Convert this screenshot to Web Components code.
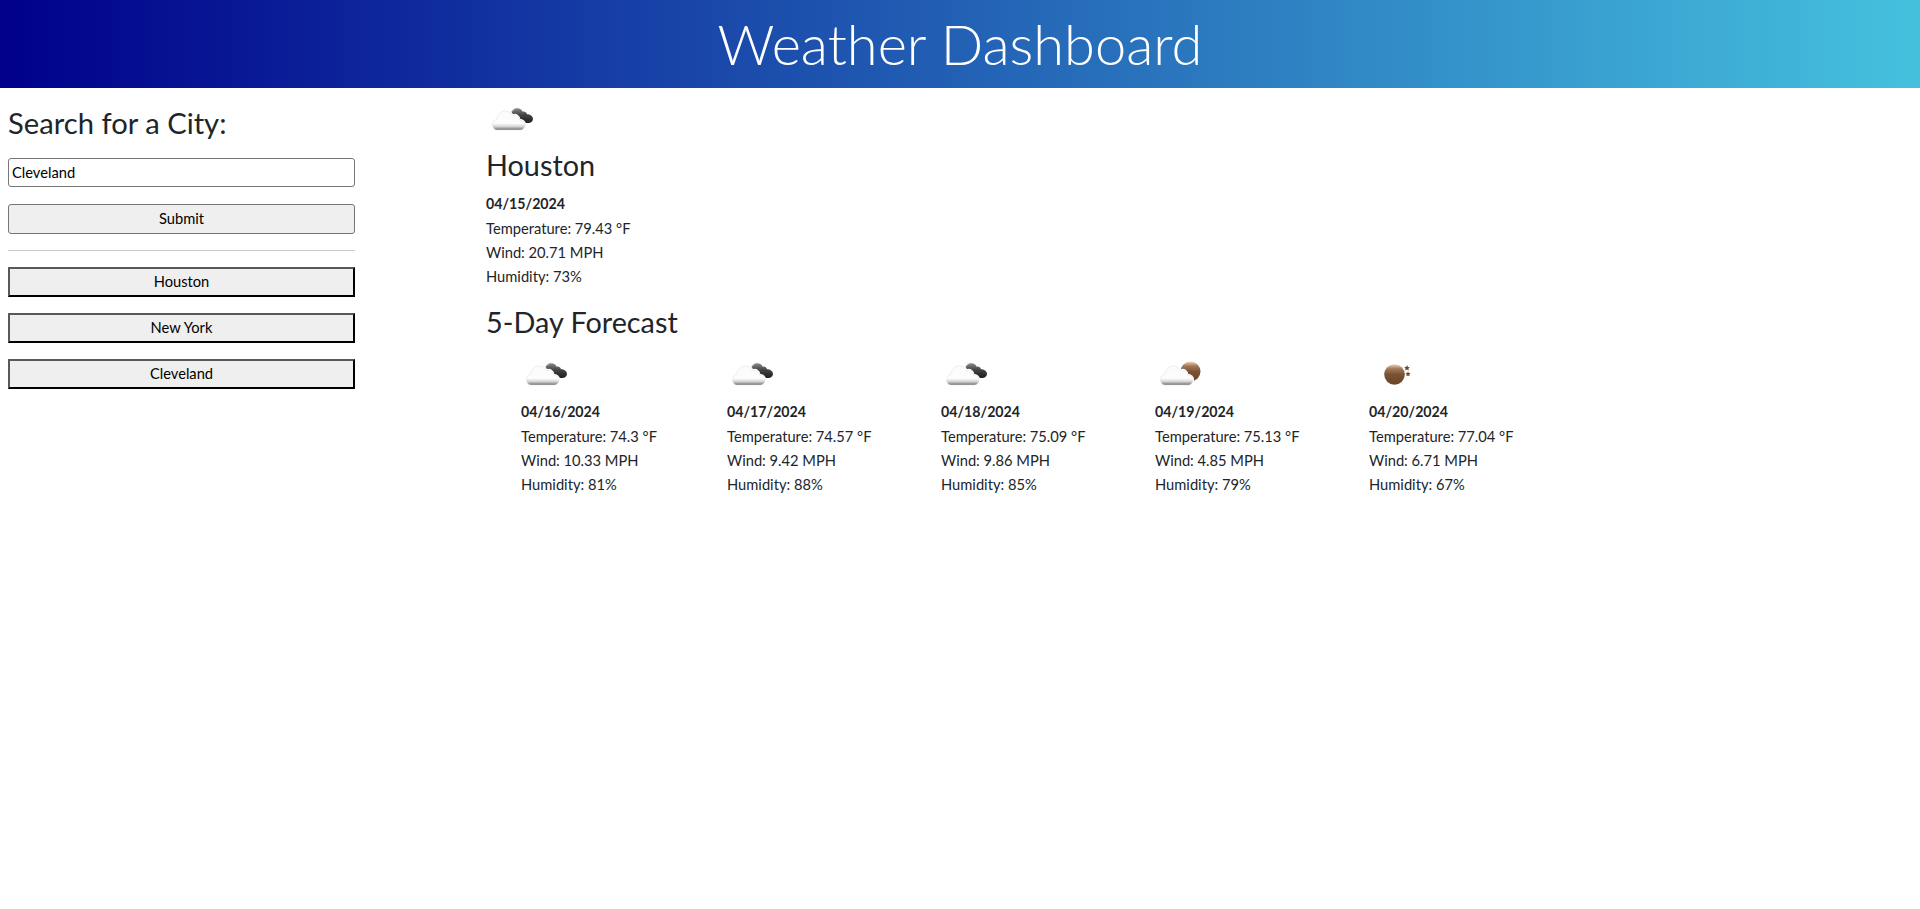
<!DOCTYPE html>
<html>
<head>
<meta charset="utf-8">
<title>Weather Dashboard</title>
<style>
  body { margin: 0; background: #fff; color: #212529; font-family: Lato, "Liberation Sans", sans-serif; font-size: 14.7px; }
</style>
</head>
<body>
<weather-app></weather-app>
<script>
// --- Icons, drawn in the 50x50 box of the original images ---
const defs = `
  <defs>
    <linearGradient id="white" x1="0" y1="0" x2="0" y2="1">
      <stop offset="0" stop-color="#fbfbfb"/><stop offset=".65" stop-color="#fdfdfd"/>
      <stop offset=".82" stop-color="#d4d4d4"/><stop offset="1" stop-color="#6f6f6f"/>
    </linearGradient>
    <linearGradient id="dark" x1="0" y1="0" x2="0" y2="1">
      <stop offset="0" stop-color="#8a8a8a"/><stop offset=".45" stop-color="#444"/><stop offset="1" stop-color="#1e1e1e"/>
    </linearGradient>
    <linearGradient id="brown" x1="0" y1="0" x2="0" y2="1">
      <stop offset="0" stop-color="#eed6c0"/><stop offset=".22" stop-color="#a47a58"/><stop offset=".5" stop-color="#7a5233"/><stop offset="1" stop-color="#6a4425"/>
    </linearGradient>
    <filter id="soft" x="-10%" y="-10%" width="120%" height="120%"><feGaussianBlur stdDeviation=".3"/></filter>
  </defs>`;
const cloudPath = "M9.500 34c-3 0-5-2.300-5-5.300 0-2.900 1.700-5 4.500-5.500 .3-4.700 3.800-8.200 8.200-8.200 3.400 0 6 1.700 7.300 4.700 1.500-.8 3.400-.8 4.800.2 1.400 1 2.100 2.500 2.100 4.100 3.200.1 5.600 2.200 5.600 5 0 2.900-2.200 5-5.200 5z";
const whiteCloud = `<path fill="#fff" stroke="#fff" stroke-width="2.400" d="${cloudPath}"/><path fill="url(#white)" stroke="#dcdcdc" stroke-width=".5" d="${cloudPath}"/>`;
const darkCloud = `<path fill="url(#dark)" d="M26 27c-2 0-3.500-2-3.500-6 0-5 3-8.800 6.800-8.800 2.600 0 4.500 1.300 5.400 3.500 1.800-.5 3.800.3 4.300 2.500 3 0 6 2 6 4.600 0 2.600-2 4.200-4.800 4.200z"/><path fill="none" stroke="#aaa" stroke-width=".9" d="M22.500 19c.6-3.600 3-6.300 6.800-6.800"/>`;
const brownSun = `<circle cx="34.500" cy="20.500" r="10" fill="url(#brown)"/>`;
const ICONS = {
  cloudy: `${darkCloud}${whiteCloud}`,
  partly: `${brownSun}${whiteCloud}`,
  clear: `<circle cx="24.500" cy="23.500" r="10.300" fill="url(#brown)"/><path fill="#6d4626" d="M37 14l.9 1.900 2 .3-1.500 1.400.4 2-1.800-1-1.800 1 .4-2-1.500-1.400 2-.3zM38 20.500l.8 1.500 1.700.3-1.200 1.200.3 1.700-1.600-.8-1.600.8.3-1.700-1.200-1.200 1.700-.3z"/>`
};

customElements.define("weather-icon", class extends HTMLElement {
  connectedCallback() {
    const shadow = this.attachShadow({ mode: "open" });
    shadow.innerHTML = `
      <style>
        :host { display: block; width: 50px; height: 50px; margin-left: 1px; }
        svg { display: block; }
      </style>
      <svg width="50" height="50" viewBox="0 0 50 50" aria-hidden="true">${defs}<g filter="url(#soft)">${ICONS[this.getAttribute("type")]}</g></svg>`;
  }
});

customElements.define("app-header", class extends HTMLElement {
  constructor() {
    super();
    this.attachShadow({ mode: "open" }).innerHTML = `
      <style>
        :host {
          display: flex; justify-content: center; align-items: center; height: 88px;
          background: linear-gradient(to right, #00008b, #45c1de); color: #fff;
        }
        h1 { margin: 0; font-size: 56px; font-weight: 300; line-height: 1; }
      </style>
      <h1><slot></slot></h1>`;
  }
});

customElements.define("city-button", class extends HTMLElement {
  constructor() {
    super();
    this.attachShadow({ mode: "open" }).innerHTML = `
      <style>
        :host { display: block; }
        button {
          display: block; width: 100%; height: 30px; padding: 0 0 2px; background: #efefef; color: #000;
          border: 2px solid #000; font: inherit; border-color: #595959 #000 #000 #595959;
        }
      </style>
      <button type="button"><slot></slot></button>`;
  }
});

customElements.define("search-panel", class extends HTMLElement {
  constructor() {
    super();
    this.attachShadow({ mode: "open" }).innerHTML = `
      <style>
        :host { display: flex; flex-direction: column; width: 347px; margin-left: 8px; padding-top: 18px; }
        h2 { margin: 0 0 18px; font-size: 29.200px; font-weight: 400; line-height: 34px; }
        input, .submit {
          box-sizing: border-box; width: 100%; font: inherit; color: #000;
          border: 1px solid #767676; border-radius: 3px;
        }
        input { display: block; height: 29px; padding: 0 3px 1px; background: #fff; }
        .submit { display: block; height: 30px; margin-top: 17px; padding: 0 0 2px; background: #efefef; }
        hr { width: 100%; box-sizing: border-box; margin: 16px 0; border: 0; border-top: 1px solid #ccc; }
        .cities { display: flex; flex-direction: column; gap: 16px; }
      </style>
      <h2>Search for a City:</h2>
      <input type="text" value="Cleveland">
      <button class="submit" type="button">Submit</button>
      <hr>
      <div class="cities"><slot></slot></div>`;
  }
});

customElements.define("weather-stats", class extends HTMLElement {
  constructor() {
    super();
    this.attachShadow({ mode: "open" }).innerHTML = `
      <style>
        :host { display: block; line-height: 24px; white-space: nowrap; }
        strong { display: block; font-size: 14.200px; font-weight: 700; }
        div { height: 24px; }
      </style>
      <strong id="date"></strong>
      <div id="temp"></div>
      <div id="wind"></div>
      <div id="hum"></div>`;
  }
  connectedCallback() {
    const root = this.shadowRoot;
    root.getElementById("date").textContent = this.getAttribute("date");
    root.getElementById("temp").textContent = `Temperature: ${this.getAttribute("temp")} °F`;
    root.getElementById("wind").textContent = `Wind: ${this.getAttribute("wind")} MPH`;
    root.getElementById("hum").textContent = `Humidity: ${this.getAttribute("hum")}%`;
  }
});

customElements.define("forecast-card", class extends HTMLElement {
  constructor() {
    super();
    this.attachShadow({ mode: "open" }).innerHTML = `
      <style>
        :host { display: block; }
      </style>
      <slot></slot>`;
  }
});

customElements.define("weather-app", class extends HTMLElement {
  constructor() {
    super();
    const days = [
      { icon: "cloudy", date: "04/16/2024", temp: "74.3", wind: "10.33", hum: 81 },
      { icon: "cloudy", date: "04/17/2024", temp: "74.57", wind: "9.42", hum: 88 },
      { icon: "cloudy", date: "04/18/2024", temp: "75.09", wind: "9.86", hum: 85 },
      { icon: "partly", date: "04/19/2024", temp: "75.13", wind: "4.85", hum: 79 },
      { icon: "clear", date: "04/20/2024", temp: "77.04", wind: "6.71", hum: 67 }
    ];
    this.attachShadow({ mode: "open" }).innerHTML = `
      <style>
        :host { display: block; }
        main { display: grid; grid-template-columns: 486px 1fr; }
        section { padding-top: 8px; }
        section > weather-icon { margin-left: 2px; }
        h2 { margin: 0; font-size: 28.800px; font-weight: 400; line-height: 34px; }
        .city { margin: 2px 0 10px; }
        .five { margin: 17px 0 12px; }
        .row { display: grid; grid-template-columns: 206px repeat(4, 214px); padding-left: 35px; }
        forecast-card weather-stats { margin-top: -1px; }
      </style>
      <app-header>Weather Dashboard</app-header>
      <main>
        <search-panel>
          <city-button>Houston</city-button>
          <city-button>New York</city-button>
          <city-button>Cleveland</city-button>
        </search-panel>
        <section>
          <weather-icon type="cloudy"></weather-icon>
          <h2 class="city">Houston</h2>
          <weather-stats date="04/15/2024" temp="79.43" wind="20.71" hum="73"></weather-stats>
          <h2 class="five">5-Day Forecast</h2>
          <div class="row">
            ${days.map(d => `
              <forecast-card>
                <weather-icon type="${d.icon}"></weather-icon>
                <weather-stats date="${d.date}" temp="${d.temp}" wind="${d.wind}" hum="${d.hum}"></weather-stats>
              </forecast-card>`).join("")}
          </div>
        </section>
      </main>`;
  }
});
</script>
</body>
</html>
